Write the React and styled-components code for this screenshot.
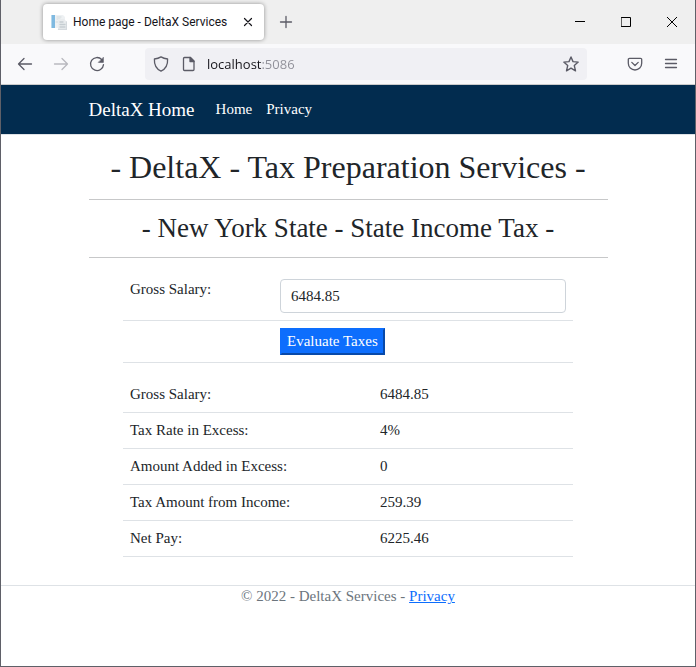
import React, { useState } from 'react';
import styled, { createGlobalStyle } from 'styled-components';

const GlobalStyle = createGlobalStyle`
    * {
        box-sizing: border-box;
    }
    body {
        margin: 0;
        background: #fff;
    }
    button, input {
        font: inherit;
        color: inherit;
    }
`;

/* browser window */
const Window = styled.div`
    display: flex;
    flex-direction: column;
    min-height: 100vh;
    border: 1px solid #5f6068;
    border-top: 0;
    background: #fff;
`;

const TabBar = styled.div`
    display: flex;
    align-items: center;
    height: 44px;
    padding-left: 42px;
    background: #efefef;
    font-family: "Segoe UI", Roboto, sans-serif;
    font-size: 12px;
    color: #15141a;
`;

const Tab = styled.div`
    display: flex;
    align-items: center;
    width: 221px;
    height: 36px;
    padding: 0 6px 0 8px;
    border-radius: 4px;
    background: #fff;
    box-shadow: 0 0 4px rgba(0, 0, 0, 0.4);
`;

const TabTitle = styled.span`
    flex: 1;
    margin-left: 6px;
    white-space: nowrap;
`;

const IconButton = styled.button`
    display: flex;
    align-items: center;
    justify-content: center;
    flex: none;
    width: ${props => props.$width || 36}px;
    height: ${props => props.$height || 32}px;
    padding: 0;
    border: 0;
    background: none;
    color: ${props => props.$color || '#5b5b66'};
    opacity: ${props => (props.disabled ? 0.4 : 1)};
`;

const WindowButtons = styled.div`
    display: flex;
    margin-left: auto;
`;

const Toolbar = styled.div`
    display: flex;
    align-items: center;
    height: 41px;
    padding: 0 6px;
    background: #f9f9fb;
    border-bottom: 1px solid #ccc;
`;

const AddressBar = styled.div`
    display: flex;
    align-items: center;
    flex: 1;
    min-width: 0;
    height: 32px;
    margin: 0 30px;
    padding: 0 2px;
    border-radius: 4px;
    background: #f0f0f4;
`;

/* the port is drawn lighter than the host */
const Address = styled.input`
    flex: 1;
    min-width: 0;
    height: 24px;
    padding: 0 0 0 4px;
    border: 0;
    outline: 0;
    font-family: "Segoe UI", "Open Sans", sans-serif;
    font-size: 13px;
    color: #15141a;
    background: linear-gradient(90deg, #15141a 59px, #8f8f98 59px);
    -webkit-background-clip: text;
    background-clip: text;
    -webkit-text-fill-color: transparent;
`;

/* web page */
const Page = styled.div`
    font-family: Georgia, "Liberation Serif", serif;
    font-size: 15px;
    line-height: 21px;
    color: #212529;
`;

const Container = styled.div`
    width: 100%;
    max-width: 543px;
    margin: 0 auto;
    padding: 0 12px;
`;

const Header = styled.header`
    background: #022c4f;
    border-bottom: 1px solid #dee2e6;
`;

const Nav = styled.nav`
    display: flex;
    align-items: center;
    height: 49px;
`;

const Brand = styled.a`
    margin-right: 14px;
    font-size: 19px;
    color: #fff;
    text-decoration: none;
`;

const NavLink = styled.a`
    padding: 7px;
    color: #fff;
    text-decoration: none;
`;

const Title = styled.h1`
    margin: 14px 0;
    font-size: 32px;
    font-weight: 400;
    line-height: 36px;
    text-align: center;
`;

const SubTitle = styled.h2`
    margin: 14px 0;
    font-size: 27px;
    font-weight: 400;
    line-height: 29px;
    text-align: center;
`;

const Line = styled.hr`
    height: 1px;
    margin: 0;
    border: 0;
    background: #c7c8c9;
`;

const Table = styled.table`
    width: 100%;
    max-width: 450px;
    margin: 14px auto;
    border-collapse: separate;
    border-spacing: 0;
    table-layout: fixed;
`;

const Cell = styled.td`
    width: ${props => (props.$width ? props.$width + 'px' : 'auto')};
    padding: 7px;
    border-bottom: 1px solid #dee2e6;
    text-align: left;
    vertical-align: top;
    font-weight: 400;
`;

const Input = styled.input`
    display: block;
    width: 100%;
    height: 34px;
    padding: 5px 10px;
    border: 1px solid #ced4da;
    border-radius: 4px;
    background: #fff;
`;

const SubmitButton = styled.button`
    display: block;
    height: 27px;
    padding: 0 5px;
    border: 2px outset #0d6efd;
    background: #0d6efd;
    color: #fff;
`;

const Footer = styled.footer`
    margin-top: 28px;
    border-top: 1px solid #dee2e6;
    color: #6c757d;
    text-align: center;

    a {
        color: #0d6efd;
    }
`;

const Svg = ({ size = 16, children, ...rest }) => (
    <svg
        width={size}
        height={size}
        viewBox={`0 0 ${size} ${size}`}
        fill="none"
        stroke="currentColor"
        strokeWidth="1.3"
        strokeLinecap="round"
        strokeLinejoin="round"
        aria-hidden="true"
        {...rest}
    >
        {children}
    </svg>
);

const Favicon = () => (
    <Svg stroke="none">
        <path d="M0 1h4v13H0z" fill="#7fb9e0" />
        <path d="M0 1h1v13H0z" fill="#b5d8ee" />
        <path d="M4 1h8l2 2v11H4z" fill="#eef1f3" />
        <path d="M6 3h4M6 5h3M5 8h2" stroke="#dde2e5" />
        <path d="M7 5h6l3 3v8H7z" fill="#e9ecee" />
        <path d="M9 8h3M9 10.5h5M9 13h5" stroke="#c6cdd2" />
        <path d="M7.5 15.5h8V8" stroke="#d5dade" />
    </Svg>
);

const rows = [
    { label: 'Gross Salary:', value: '6484.85' },
    { label: 'Tax Rate in Excess:', value: '4%' },
    { label: 'Amount Added in Excess:', value: '0' },
    { label: 'Tax Amount from Income:', value: '259.39' },
    { label: 'Net Pay:', value: '6225.46' },
];

const Browser = ({ children }) => (
    <Window>
        <TabBar>
            <Tab>
                <Favicon />
                <TabTitle>Home page - DeltaX Services</TabTitle>
                <IconButton $width={20} $height={24} $color="#15141a" aria-label="Close tab">
                    <Svg strokeWidth="1.2"><path d="M4.5 4.5l7 7M11.5 4.5l-7 7" /></Svg>
                </IconButton>
            </Tab>
            <IconButton $width={44} aria-label="New tab">
                <Svg><path d="M8 2.5v11M2.5 8h11" /></Svg>
            </IconButton>
            <WindowButtons>
                <IconButton $width={46} $height={44} $color="#000" aria-label="Minimize">
                    <Svg size={10} strokeWidth="1" strokeLinecap="butt"><path d="M0 4.5h10" /></Svg>
                </IconButton>
                <IconButton $width={46} $height={44} $color="#000" aria-label="Maximize">
                    <Svg size={10} strokeWidth="1" strokeLinejoin="miter"><path d="M.5.5h9v9h-9z" /></Svg>
                </IconButton>
                <IconButton $width={46} $height={44} $color="#000" aria-label="Close">
                    <Svg size={10} strokeWidth="1"><path d="M0 0l10 10M10 0L0 10" /></Svg>
                </IconButton>
            </WindowButtons>
        </TabBar>
        <Toolbar>
            <IconButton aria-label="Back">
                <Svg><path d="M14.5 8h-13M7 2.5L1.5 8 7 13.5" /></Svg>
            </IconButton>
            <IconButton aria-label="Forward" disabled>
                <Svg><path d="M1.5 8h13M9 2.5L14.5 8 9 13.5" /></Svg>
            </IconButton>
            <IconButton aria-label="Reload">
                <Svg>
                    <path d="M12.8 3.6A6.5 6.5 0 1 0 14.5 8.6" />
                    <path d="M14.4 1.6v4.8H9.6z" fill="currentColor" strokeWidth=".6" />
                </Svg>
            </IconButton>
            <AddressBar>
                <IconButton $width={28} aria-label="Tracking protection">
                    <Svg><path d="M8 .9C6.2 2 4 2.7 1.4 3c-.3 5.4 1.5 9.8 6.6 12.1 5.1-2.3 6.9-6.7 6.6-12.1C12 2.7 9.8 2 8 .9z" /></Svg>
                </IconButton>
                <IconButton $width={28} aria-label="Site information">
                    <Svg>
                        <path d="M3.5 1.5h6L13 5v8.5a1 1 0 0 1-1 1H3.5a1 1 0 0 1-1-1v-11a1 1 0 0 1 1-1z" />
                        <path d="M9 1.5v4h4z" fill="currentColor" />
                    </Svg>
                </IconButton>
                <Address aria-label="Address" defaultValue="localhost:5086" />
                <IconButton $width={28} aria-label="Bookmark this page">
                    <Svg strokeWidth="1.4"><path d="M8 1l2 4.6 5.2.5-3.9 3.5 1.2 5.2L8 12.2l-4.5 2.6 1.2-5.2L.8 6.1 6 5.6z" /></Svg>
                </IconButton>
            </AddressBar>
            <IconButton aria-label="Save to Pocket">
                <Svg>
                    <path d="M2.5 2.3h11a1.2 1.2 0 0 1 1.2 1.2v3.8a6.7 6.7 0 0 1-13.4 0V3.5a1.2 1.2 0 0 1 1.2-1.2z" />
                    <path d="M4.8 6.4L8 9.5l3.2-3.1" />
                </Svg>
            </IconButton>
            <IconButton aria-label="Open menu">
                <Svg strokeWidth="1.3"><path d="M2.5 3.5h11M2.5 7.5h11M2.5 11.5h11" /></Svg>
            </IconButton>
        </Toolbar>
        {children}
    </Window>
);

const App = () => {
    const [salary, setSalary] = useState('6484.85');

    return (
        <>
            <GlobalStyle />
            <Browser>
                <Page>
                    <Header>
                        <Container>
                            <Nav>
                                <Brand href="#home">DeltaX Home</Brand>
                                <NavLink href="#home">Home</NavLink>
                                <NavLink href="#privacy">Privacy</NavLink>
                            </Nav>
                        </Container>
                    </Header>
                    <Container as="main">
                        <Title>- DeltaX - Tax Preparation Services -</Title>
                        <Line />
                        <SubTitle>- New York State - State Income Tax -</SubTitle>
                        <Line />
                        <form onSubmit={e => e.preventDefault()}>
                            <Table>
                                <tbody>
                                    <tr>
                                        <Cell $width={150}><label htmlFor="salary">Gross Salary:</label></Cell>
                                        <Cell>
                                            <Input id="salary" value={salary} onChange={e => setSalary(e.target.value)} />
                                        </Cell>
                                    </tr>
                                    <tr>
                                        <Cell />
                                        <Cell><SubmitButton type="submit">Evaluate Taxes</SubmitButton></Cell>
                                    </tr>
                                </tbody>
                            </Table>
                        </form>
                        <Table>
                            <tbody>
                                {rows.map(row => (
                                    <tr key={row.label}>
                                        <Cell as="th" scope="row" $width={250}>{row.label}</Cell>
                                        <Cell>{row.value}</Cell>
                                    </tr>
                                ))}
                            </tbody>
                        </Table>
                    </Container>
                    <Footer>
                        &copy; 2022 - DeltaX Services - <a href="#privacy">Privacy</a>
                    </Footer>
                </Page>
            </Browser>
        </>
    );
};

export default App;
